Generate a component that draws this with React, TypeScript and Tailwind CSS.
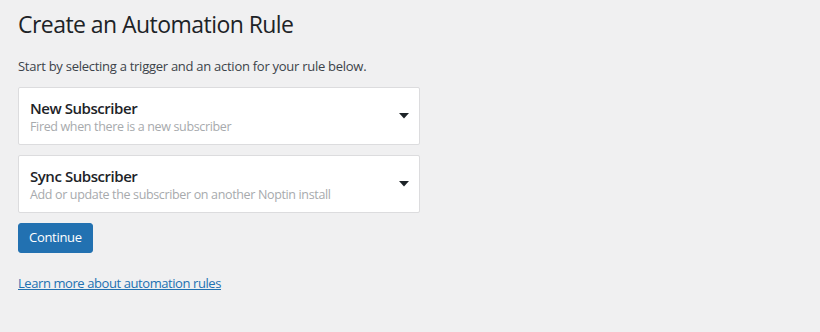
import React from "react";

const Caret = () => (
  <svg width="10" height="6" viewBox="0 0 10 6" className="shrink-0">
    <path d="M0 0 L10 0 L5 5.5 Z" fill="#1d2327" />
  </svg>
);

const Card = ({ title, desc }: { title: string; desc: string }) => (
  <div className="flex items-center justify-between w-[402px] h-[58px] bg-white border border-[#dcdcde] rounded-[2px] pl-[11px] pr-[10px]">
    <div className="flex flex-col pt-[2px]">
      <div className="text-[15px] leading-[20px] font-semibold text-[#1d2327] tracking-[-0.45px]">{title}</div>
      <div className="text-[12.5px] leading-[18px] text-[#a7aaad] tracking-[-0.35px]">{desc}</div>
    </div>
    <Caret />
  </div>
);

export default function App() {
  return (
    <div
      className="w-[820px] h-[332px] bg-[#f0f0f1] px-[18px] pt-[10px]"
      style={{ fontFamily: '"Segoe UI", "Open Sans", "Noto Sans", sans-serif' }}
    >
      <h1 className="text-[23px] leading-[29px] font-normal text-[#1d2327] tracking-[-0.55px]">Create an Automation Rule</h1>
      <p className="mt-[18px] text-[13px] leading-[18px] text-[#3c434a] tracking-[-0.27px]">
        Start by selecting a trigger and an action for your rule below.
      </p>
      <div className="mt-[12px] flex flex-col gap-[10px]">
        <Card title="New Subscriber" desc="Fired when there is a new subscriber" />
        <Card title="Sync Subscriber" desc="Add or update the subscriber on another Noptin install" />
      </div>
      <button className="mt-[10px] h-[30px] px-[10px] bg-[#2271b1] text-white text-[13px] rounded-[3px] border border-[#2271b1] tracking-[-0.3px]">
        Continue
      </button>
      <div className="mt-[17px]">
        <a href="#" className="text-[13px] leading-[18px] text-[#2271b1] underline tracking-[-0.42px]">
          Learn more about automation rules
        </a>
      </div>
    </div>
  );
}
